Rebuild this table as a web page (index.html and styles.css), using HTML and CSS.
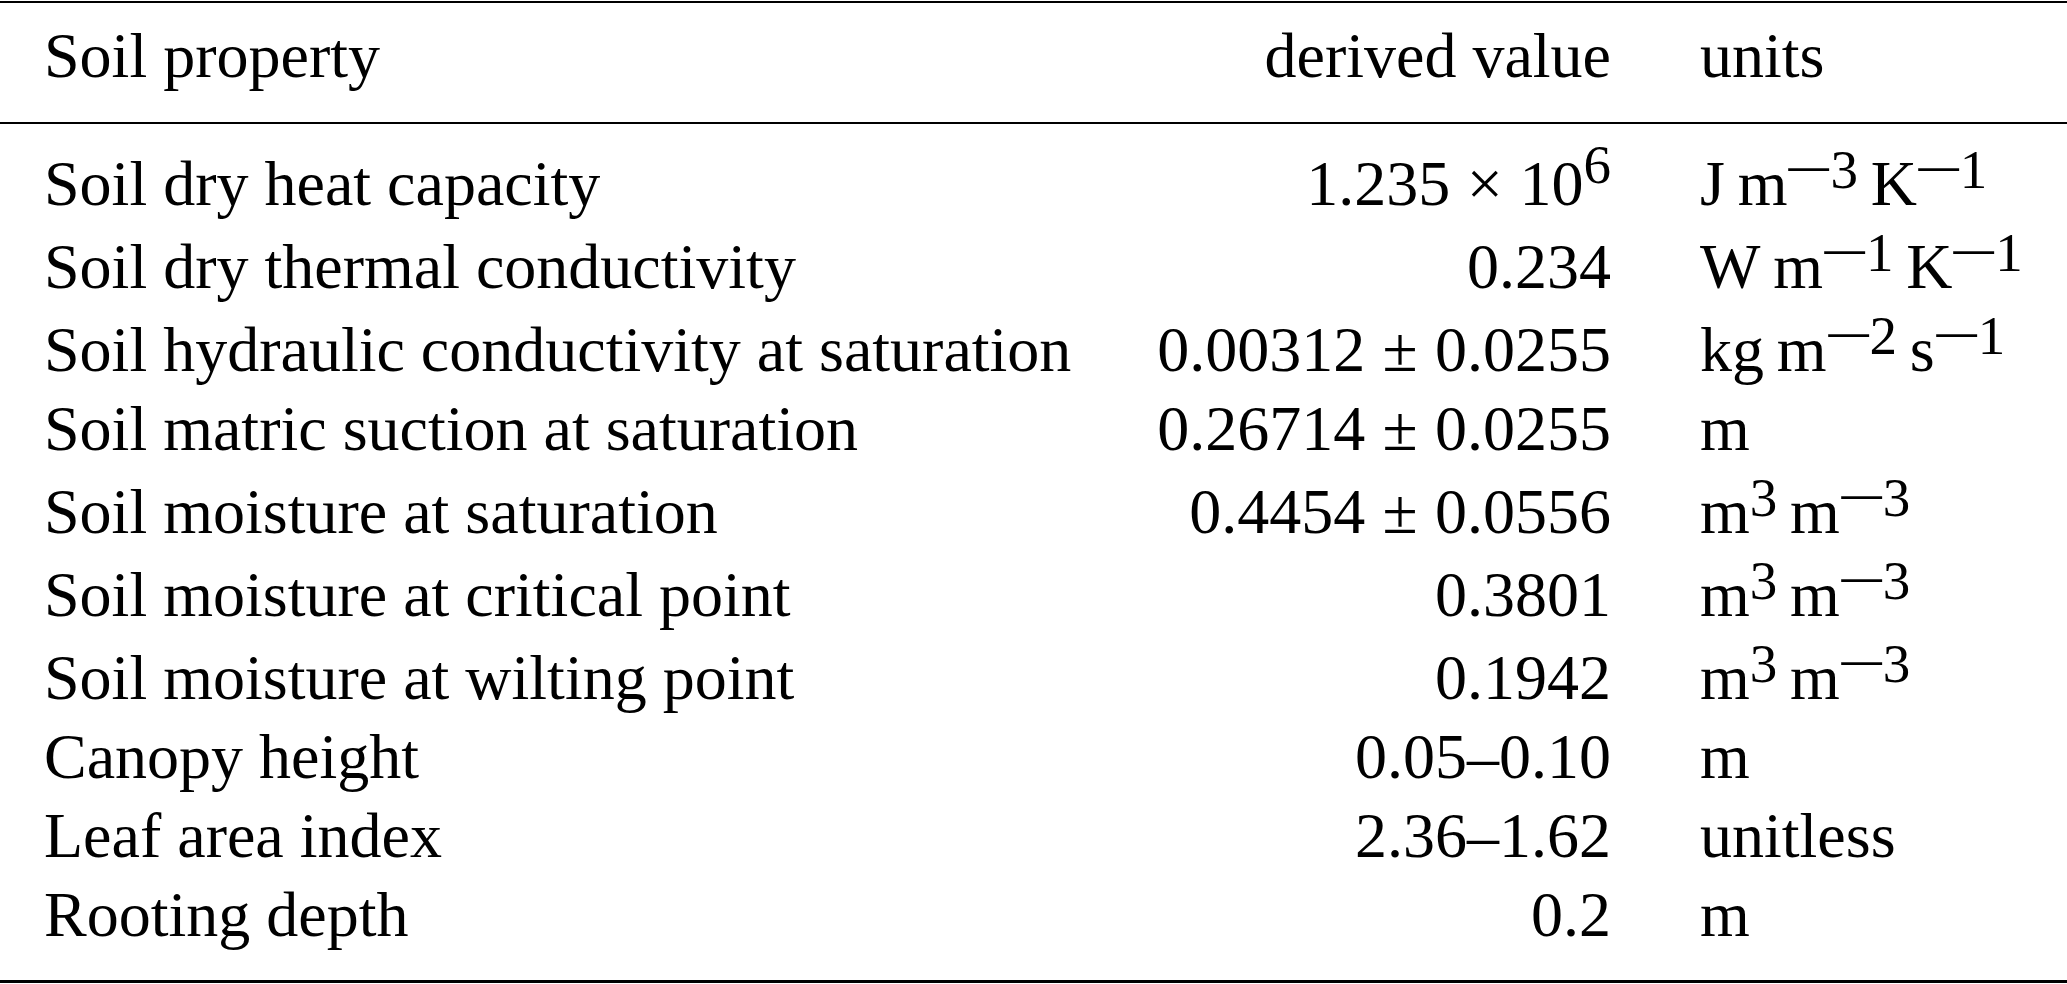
FILE: index.html
```html
<!DOCTYPE html>
<html lang="en">
<head>
<meta charset="utf-8">
<title>Soil properties</title>
<link rel="stylesheet" href="styles.css">
</head>
<body>
<div class="table">
  <div class="rule rule-top"></div>
  <div class="row head">
    <div class="c1">Soil property</div>
    <div class="c2">derived value</div>
    <div class="c3">units</div>
  </div>
  <div class="rule rule-mid"></div>
  <div class="body">
    <div class="row tall">
      <div class="c1">Soil dry heat capacity</div>
      <div class="c2">1.235<span class="times">×</span>10<span class="sup">6</span></div>
      <div class="c3">J<span class="u">m</span><span class="usup"><span class="minus">−</span>3</span><span class="u">K</span><span class="usup"><span class="minus">−</span>1</span></div>
    </div>
    <div class="row tall">
      <div class="c1">Soil dry thermal conductivity</div>
      <div class="c2">0.234</div>
      <div class="c3">W<span class="u">m</span><span class="usup"><span class="minus">−</span>1</span><span class="u">K</span><span class="usup"><span class="minus">−</span>1</span></div>
    </div>
    <div class="row tall">
      <div class="c1">Soil hydraulic conductivity at saturation</div>
      <div class="c2">0.00312<span class="pm">±</span>0.0255</div>
      <div class="c3">kg<span class="u">m</span><span class="usup"><span class="minus">−</span>2</span><span class="u">s</span><span class="usup"><span class="minus">−</span>1</span></div>
    </div>
    <div class="row">
      <div class="c1">Soil matric suction at saturation</div>
      <div class="c2">0.26714<span class="pm">±</span>0.0255</div>
      <div class="c3">m</div>
    </div>
    <div class="row tall">
      <div class="c1">Soil moisture at saturation</div>
      <div class="c2">0.4454<span class="pm">±</span>0.0556</div>
      <div class="c3">m<span class="usup">3</span><span class="u">m</span><span class="usup"><span class="minus">−</span>3</span></div>
    </div>
    <div class="row tall">
      <div class="c1">Soil moisture at critical point</div>
      <div class="c2">0.3801</div>
      <div class="c3">m<span class="usup">3</span><span class="u">m</span><span class="usup"><span class="minus">−</span>3</span></div>
    </div>
    <div class="row tall">
      <div class="c1">Soil moisture at wilting point</div>
      <div class="c2">0.1942</div>
      <div class="c3">m<span class="usup">3</span><span class="u">m</span><span class="usup"><span class="minus">−</span>3</span></div>
    </div>
    <div class="row">
      <div class="c1">Canopy height</div>
      <div class="c2">0.05–0.10</div>
      <div class="c3">m</div>
    </div>
    <div class="row">
      <div class="c1">Leaf area index</div>
      <div class="c2">2.36–1.62</div>
      <div class="c3">unitless</div>
    </div>
    <div class="row">
      <div class="c1">Rooting depth</div>
      <div class="c2">0.2</div>
      <div class="c3">m</div>
    </div>
  </div>
  <div class="rule rule-bottom"></div>
</div>
</body>
</html>
```

FILE: styles.css
```css
html, body {
  margin: 0;
  padding: 0;
  background: #ffffff;
}

body {
  width: 2067px;
  height: 984px;
  overflow: hidden;
  font-family: "Liberation Serif", "Times New Roman", serif;
  font-size: 64px;
  color: #000000;
}

.table {
  display: flex;
  flex-direction: column;
}

.rule {
  background: #000000;
  height: 2px;
}

.rule-top {
  margin-top: 1px;
}

.rule-bottom {
  height: 3px;
}

.row {
  display: grid;
  grid-template-columns: 1114px 541px 1fr;
  line-height: 79px;
  height: 79px;
  white-space: nowrap;
}

.row.tall {
  padding-top: 4px;
  box-sizing: border-box;
  height: 83px;
}

.row.head {
  height: 119px;
  padding-top: 13px;
  box-sizing: border-box;
}

.body {
  display: flex;
  flex-direction: column;
  padding-top: 16px;
  padding-bottom: 26px;
}

.c1 {
  padding-left: 44px;
}

.c2 {
  text-align: right;
  padding-right: 44px;
}

.c3 {
  padding-left: 45px;
}

.sup {
  font-size: 0.86em;
  vertical-align: 0.4em;
  line-height: 0;
}

.usup {
  font-size: 0.86em;
  vertical-align: 0.31em;
  line-height: 0;
}

.minus {
  display: inline-block;
  width: 0.78em;
  text-align: center;
  transform: scaleX(1.6);
}

.u {
  margin-left: 0.2em;
}

.times {
  margin: 0 0.26em;
}

.pm {
  margin: 0 0.27em;
}
```
